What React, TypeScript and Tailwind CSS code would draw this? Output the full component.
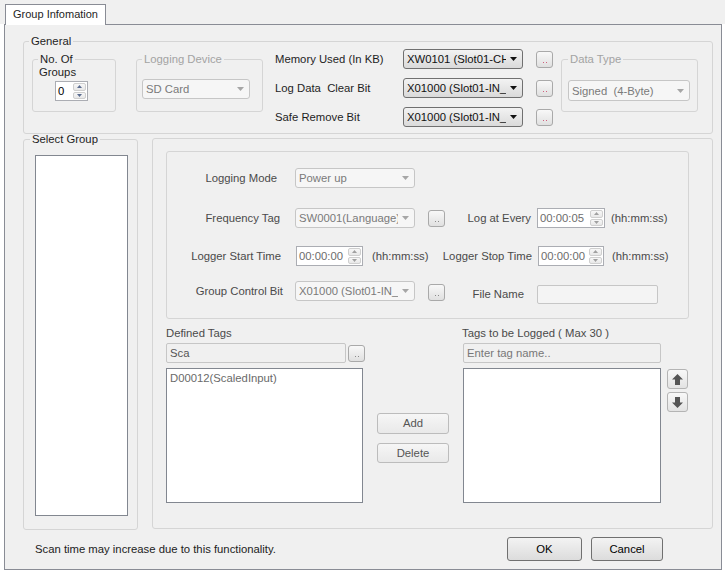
import React from "react";

const ComboArrow = ({ color }: { color: string }) => (
  <svg width="7" height="4" viewBox="0 0 7 4" className="ml-[4px] shrink-0">
    <path d="M0 0H7L3.5 4Z" fill={color} />
  </svg>
);

function Combo({ text, className, enabled }: { text: string; className: string; enabled?: boolean }) {
  return (
    <div
      className={`flex items-center overflow-hidden rounded-[3px] border pl-[3px] pr-[5px] ${
        enabled
          ? "border-[#707070] bg-linear-to-b from-[#f3f3f3] to-[#dadada] text-[#111]"
          : "border-[#c6c6c6] bg-[#f6f6f6] text-[#7a7a7a]"
      } ${className}`}
    >
      <span className="min-w-0 flex-1 overflow-hidden whitespace-pre">{text}</span>
      <ComboArrow color={enabled ? "#111" : "#a6a6a6"} />
    </div>
  );
}

function Spin({ value, className, dark }: { value: string; className: string; dark?: boolean }) {
  const c = dark ? "#5b6c8f" : "#a0a0a0";
  return (
    <div className={`flex border border-[#abadb3] bg-white ${className}`}>
      <span className={`min-w-0 flex-1 overflow-hidden pl-[2px] leading-[18px] ${dark ? "text-black" : "text-[#6d6d6d]"}`}>
        {value}
      </span>
      <div className="flex w-[15px] flex-col gap-px p-px">
        <div className="flex flex-1 items-center justify-center rounded-[2px] border border-[#cfcfcf] bg-linear-to-b from-[#f7f7f7] to-[#e8e8e8]">
          <svg width="5" height="3" viewBox="0 0 5 3">
            <path d="M0 3H5L2.5 0Z" fill={c} />
          </svg>
        </div>
        <div className="flex flex-1 items-center justify-center rounded-[2px] border border-[#cfcfcf] bg-linear-to-b from-[#f7f7f7] to-[#e8e8e8]">
          <svg width="5" height="3" viewBox="0 0 5 3">
            <path d="M0 0H5L2.5 3Z" fill={c} />
          </svg>
        </div>
      </div>
    </div>
  );
}

function DotBtn({ red, className = "" }: { red?: boolean; className?: string }) {
  return (
    <div
      className={`flex h-[17px] w-[17px] shrink-0 items-end justify-center gap-[2px] rounded-[3px] border border-[#a9a9a9] bg-linear-to-b from-[#f8f8f8] to-[#e0e0e0] pb-[4px] ${className}`}
    >
      <span className={`h-px w-px ${red ? "bg-[#d0607e]" : "bg-[#8a8a8a]"}`} />
      <span className={`h-px w-px ${red ? "bg-[#d0607e]" : "bg-[#8a8a8a]"}`} />
    </div>
  );
}

function ListBox({ className, children }: { className: string; children?: React.ReactNode }) {
  return <div className={`border border-[#828790] bg-white ${className}`}>{children}</div>;
}

function MoveBtn({ up }: { up?: boolean }) {
  return (
    <div className="flex h-[20px] w-[21px] items-center justify-center rounded-[3px] border border-[#b4b4b4] bg-linear-to-b from-[#f8f8f8] to-[#e3e3e3]">
      <svg width="11" height="11" viewBox="0 0 11 11">
        {up ? (
          <path d="M5.5 0L11 5.5H8V11H3V5.5H0Z" fill="#555" />
        ) : (
          <path d="M5.5 11L11 5.5H8V0H3V5.5H0Z" fill="#555" />
        )}
      </svg>
    </div>
  );
}

export default function App() {
  return (
    <div className="h-[572px] w-[725px] overflow-hidden whitespace-nowrap bg-white font-['Liberation_Sans',Arial,sans-serif] text-[11.3px] leading-[14px] text-[#1e1e1e]">
      {/* tab strip */}
      <div className="flex h-[24px] items-end bg-[#f0f0f0] pl-[5px]">
        <div className="relative z-10 -mb-px h-[21px] w-[101px] border border-b-0 border-[#898c95] bg-white pl-[7px] text-[11px] leading-[19px]">
          Group Infomation
        </div>
      </div>

      <div className="ml-[4px] h-[546px] w-[718px] border border-[#898c95] bg-[#f0f0f0]">
        {/* General */}
        <fieldset className="ml-[18px] mt-[9px] h-[100px] w-[690px] rounded-[3px] border border-[#d5d5d5]">
          <legend className="ml-[5px] px-[2px] leading-[14px]">General</legend>
          <div className="flex items-start">
            <fieldset className="ml-[8px] mt-[4px] h-[60px] w-[84px] rounded-[3px] border border-[#d5d5d5]">
              <legend className="ml-[5px] px-[2px] leading-[14px]">No. Of</legend>
              <div className="pl-[6px] leading-[13px]">Groups</div>
              <Spin value="0" dark className="ml-[22px] mt-[2px] h-[20px] w-[33px]" />
            </fieldset>

            <fieldset className="ml-[20px] mt-[4px] h-[60px] w-[127px] rounded-[3px] border border-[#d5d5d5]">
              <legend className="ml-[5px] px-[2px] leading-[14px] text-[#a3a3a3]">Logging Device</legend>
              <Combo text="SD Card" className="ml-[5px] mt-[13px] h-[20px] w-[108px]" />
            </fieldset>

            <div className="ml-[12px] mt-px flex flex-col gap-[9px]">
              {[
                ["Memory Used (In KB)", "XW0101 (Slot01-CH1)"],
                ["Log Data  Clear Bit", "X01000 (Slot01-IN_0)"],
                ["Safe Remove Bit", "X01000 (Slot01-IN_0)"],
              ].map(([label, value]) => (
                <div key={label} className="flex h-[20px] items-center">
                  <span className="w-[128px] whitespace-pre">{label}</span>
                  <Combo enabled text={value} className="h-[20px] w-[120px]" />
                  <DotBtn red className="ml-[13px]" />
                </div>
              ))}
            </div>

            <fieldset className="ml-[8px] mt-[4px] h-[60px] w-[137px] rounded-[3px] border border-[#d5d5d5]">
              <legend className="ml-[6px] px-[2px] leading-[14px] text-[#a3a3a3]">Data Type</legend>
              <Combo text="Signed  (4-Byte)" className="ml-[6px] mt-[14px] h-[21px] w-[122px]" />
            </fieldset>
          </div>
        </fieldset>

        <div className="flex items-start">
          {/* Select Group */}
          <fieldset className="ml-[18px] h-[396px] w-[115px] rounded-[3px] border border-[#d5d5d5]">
            <legend className="ml-[6px] px-[2px] leading-[10px]">Select Group</legend>
            <ListBox className="ml-[11px] mt-[11px] h-[361px] w-[93px]" />
          </fieldset>

          {/* Right panel */}
          <div className="ml-[14px] mt-[4px] h-[391px] w-[561px] rounded-[3px] border border-[#d5d5d5]">
            <div className="ml-[13px] mt-[12px] h-[168px] w-[523px] rounded-[3px] border border-[#d5d5d5] pt-[16px] text-[#4a4a4a]">
              <div className="flex h-[20px] items-center">
                <span className="w-[114px] pr-[4px] text-right">Logging Mode</span>
                <Combo text="Power up" className="ml-[14px] h-[20px] w-[120px]" />
              </div>

              <div className="mt-[20px] flex h-[20px] items-center">
                <span className="w-[114px] pr-[1px] text-right">Frequency Tag</span>
                <Combo text="SW0001(Language)" className="ml-[14px] h-[20px] w-[120px]" />
                <DotBtn className="ml-[13px]" />
                <span className="w-[86px] text-right">Log at Every</span>
                <Spin value="00:00:05" className="ml-[6px] h-[20px] w-[68px]" />
                <span className="ml-[6px]">(hh:mm:ss)</span>
              </div>

              <div className="mt-[18px] flex h-[20px] items-center">
                <span className="w-[114px] text-right">Logger Start Time</span>
                <div className="flex w-[160px] shrink-0 items-center">
                  <Spin value="00:00:00" className="ml-[15px] h-[20px] w-[67px]" />
                  <span className="ml-[9px]">(hh:mm:ss)</span>
                </div>
                <span className="w-[91px] shrink-0 text-right">Logger Stop Time</span>
                <Spin value="00:00:00" className="ml-[6px] h-[20px] w-[66px]" />
                <span className="ml-[8px]">(hh:mm:ss)</span>
              </div>

              <div className="mt-[15px] flex h-[20px] items-center">
                <span className="w-[116px] text-right">Group Control Bit</span>
                <Combo text="X01000 (Slot01-IN_0)" className="ml-[12px] h-[20px] w-[120px]" />
                <DotBtn className="ml-[13px] mt-[3px]" />
                <span className="mt-[6px] w-[86px] pr-[7px] text-right">File Name</span>
                <div className="ml-[6px] mt-[7px] h-[19px] w-[121px] rounded-[2px] border border-[#c6c6c6] bg-[#f4f4f4]" />
              </div>
            </div>

            <div className="ml-[13px] flex items-start text-[#4a4a4a]">
              <div className="flex w-[199px] flex-col">
                <span className="mt-[7px]">Defined Tags</span>
                <div className="mt-[3px] flex items-center">
                  <div className="h-[20px] w-[181px] rounded-[2px] border border-[#c6c6c6] bg-[#f0f0f0] pl-[3px] leading-[18px] text-[#555]">
                    Sca
                  </div>
                  <DotBtn className="ml-[2px]" />
                </div>
                <ListBox className="mt-[5px] h-[135px] w-[197px] pl-[3px] pt-[2px] text-[#6a6a6a]">D00012(ScaledInput)</ListBox>
              </div>

              <div className="ml-[12px] mt-[94px] flex flex-col gap-[9px]">
                <div className="h-[21px] w-[72px] rounded-[3px] border border-[#bcbcbc] bg-linear-to-b from-[#f6f6f6] to-[#e9e9e9] text-center leading-[19px] text-[#555]">
                  Add
                </div>
                <div className="h-[20px] w-[72px] rounded-[3px] border border-[#bcbcbc] bg-linear-to-b from-[#f6f6f6] to-[#e9e9e9] text-center leading-[18px] text-[#555]">
                  Delete
                </div>
              </div>

              <div className="ml-[14px] flex flex-col">
                <span className="mt-[7px] -ml-px">Tags to be Logged ( Max 30 )</span>
                <div className="mt-[3px] h-[20px] w-[198px] rounded-[2px] border border-[#c6c6c6] bg-[#f0f0f0] pl-[3px] leading-[18px] text-[#777]">
                  Enter tag name..
                </div>
                <div className="mt-[5px] flex items-start">
                  <ListBox className="h-[135px] w-[198px]" />
                  <div className="ml-[6px] mt-px flex flex-col gap-[3px]">
                    <MoveBtn up />
                    <MoveBtn />
                  </div>
                </div>
              </div>
            </div>
          </div>
        </div>

        {/* Footer */}
        <div className="mt-[7px] flex h-[24px] items-center pl-[30px] pr-[58px]">
          <span className="text-[#222]">Scan time may increase due to this functionality.</span>
          <div className="ml-auto flex gap-[9px]">
            <div className="h-[24px] w-[75px] rounded-[3px] border border-[#707070] bg-linear-to-b from-[#f3f3f3] to-[#dcdcdc] text-center leading-[22px] text-black">
              OK
            </div>
            <div className="h-[24px] w-[72px] rounded-[3px] border border-[#707070] bg-linear-to-b from-[#f3f3f3] to-[#dcdcdc] text-center leading-[22px] text-black">
              Cancel
            </div>
          </div>
        </div>
      </div>
    </div>
  );
}
